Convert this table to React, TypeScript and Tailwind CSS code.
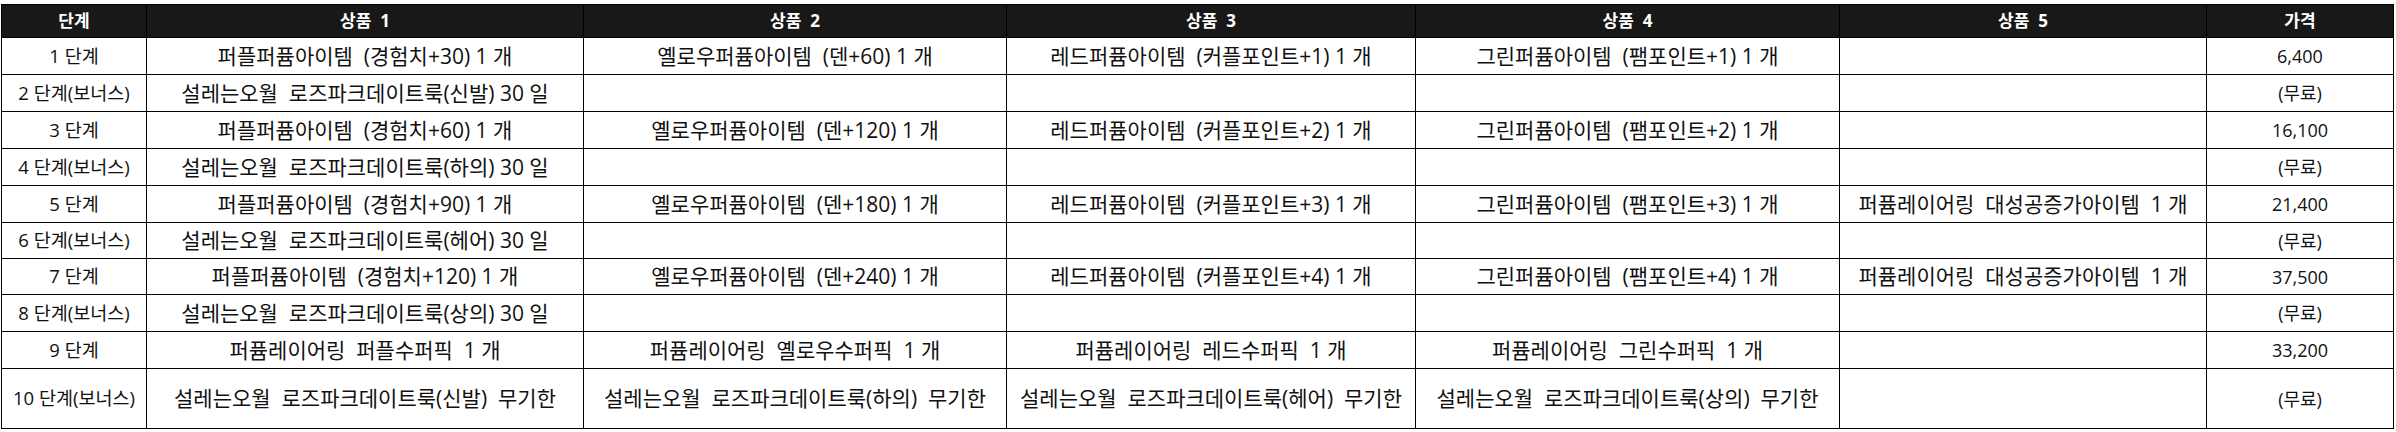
const headers = ["단계", "상품  1", "상품  2", "상품  3", "상품  4", "상품  5", "가격"];

const colWidths = [145, 437, 423, 409, 424, 367, 187];

type Row = { cells: string[]; h: string };

const rows: Row[] = [
  {
    h: "h-[37px]",
    cells: [
      "1 단계",
      "퍼플퍼퓸아이템  (경험치+30) 1 개",
      "옐로우퍼퓸아이템  (덴+60) 1 개",
      "레드퍼퓸아이템  (커플포인트+1) 1 개",
      "그린퍼퓸아이템  (팸포인트+1) 1 개",
      "",
      "6,400",
    ],
  },
  {
    h: "h-[37px]",
    cells: ["2 단계(보너스)", "설레는오월  로즈파크데이트룩(신발) 30 일", "", "", "", "", "(무료)"],
  },
  {
    h: "h-[37px]",
    cells: [
      "3 단계",
      "퍼플퍼퓸아이템  (경험치+60) 1 개",
      "옐로우퍼퓸아이템  (덴+120) 1 개",
      "레드퍼퓸아이템  (커플포인트+2) 1 개",
      "그린퍼퓸아이템  (팸포인트+2) 1 개",
      "",
      "16,100",
    ],
  },
  {
    h: "h-[37px]",
    cells: ["4 단계(보너스)", "설레는오월  로즈파크데이트룩(하의) 30 일", "", "", "", "", "(무료)"],
  },
  {
    h: "h-[37px]",
    cells: [
      "5 단계",
      "퍼플퍼퓸아이템  (경험치+90) 1 개",
      "옐로우퍼퓸아이템  (덴+180) 1 개",
      "레드퍼퓸아이템  (커플포인트+3) 1 개",
      "그린퍼퓸아이템  (팸포인트+3) 1 개",
      "퍼퓸레이어링  대성공증가아이템  1 개",
      "21,400",
    ],
  },
  {
    h: "h-[36px]",
    cells: ["6 단계(보너스)", "설레는오월  로즈파크데이트룩(헤어) 30 일", "", "", "", "", "(무료)"],
  },
  {
    h: "h-[36px]",
    cells: [
      "7 단계",
      "퍼플퍼퓸아이템  (경험치+120) 1 개",
      "옐로우퍼퓸아이템  (덴+240) 1 개",
      "레드퍼퓸아이템  (커플포인트+4) 1 개",
      "그린퍼퓸아이템  (팸포인트+4) 1 개",
      "퍼퓸레이어링  대성공증가아이템  1 개",
      "37,500",
    ],
  },
  {
    h: "h-[37px]",
    cells: ["8 단계(보너스)", "설레는오월  로즈파크데이트룩(상의) 30 일", "", "", "", "", "(무료)"],
  },
  {
    h: "h-[37px]",
    cells: [
      "9 단계",
      "퍼퓸레이어링  퍼플수퍼픽  1 개",
      "퍼퓸레이어링  옐로우수퍼픽  1 개",
      "퍼퓸레이어링  레드수퍼픽  1 개",
      "퍼퓸레이어링  그린수퍼픽  1 개",
      "",
      "33,200",
    ],
  },
  {
    h: "h-[60px]",
    cells: [
      "10 단계(보너스)",
      "설레는오월  로즈파크데이트룩(신발)  무기한",
      "설레는오월  로즈파크데이트룩(하의)  무기한",
      "설레는오월  로즈파크데이트룩(헤어)  무기한",
      "설레는오월  로즈파크데이트룩(상의)  무기한",
      "",
      "(무료)",
    ],
  },
];

export default function App() {
  return (
    <div className="min-h-[432px] w-[2396px] bg-white pl-px pt-[4px] font-['Open_Sans','Noto_Sans_CJK_KR',sans-serif] text-[#111]">
      <table className="w-[2392px] table-fixed border-collapse">
        <colgroup>
          {colWidths.map((w, i) => (
            <col key={i} style={{ width: w }} />
          ))}
        </colgroup>
        <thead>
          <tr className="h-[33px] bg-[#181818]">
            {headers.map((h) => (
              <th
                key={h}
                className="whitespace-pre border border-black p-0 text-center align-middle text-[17px] font-bold text-white"
              >
                {h}
              </th>
            ))}
          </tr>
        </thead>
        <tbody>
          {rows.map((row, ri) => (
            <tr key={ri} className={row.h}>
              {row.cells.map((c, ci) => (
                <td
                  key={ci}
                  className={`whitespace-pre border border-black p-0 text-center align-middle leading-none ${
                    ci === 0 ? "text-[18.5px]" : ci === 6 ? "text-[18px]" : "text-[21px]"
                  }`}
                >
                  {c}
                </td>
              ))}
            </tr>
          ))}
        </tbody>
      </table>
    </div>
  );
}
